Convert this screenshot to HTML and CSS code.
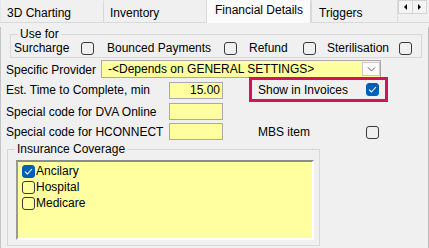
FILE: index.html
```html
<!DOCTYPE html>
<html>
<head>
<meta charset="utf-8">
<link rel="stylesheet" href="styles.css">
</head>
<body>
<div class="tabctl">
  <div class="tabbar">
    <div class="tab t1">3D Charting</div>
    <div class="tab t2">Inventory</div>
    <div class="tab active">Financial Details</div>
    <div class="tab t4">Triggers</div>
    <div class="spin">
      <span class="sbtn"><span class="tri left"></span></span>
      <span class="sbtn"><span class="tri right"></span></span>
    </div>
  </div>
  <div class="page">
    <fieldset class="grp usefor">
      <legend>Use for</legend>
      <div class="userow">
        <label class="opt o1">Surcharge<span class="cb"></span></label>
        <label class="opt o2">Bounced Payments<span class="cb"></span></label>
        <label class="opt o3">Refund<span class="cb"></span></label>
        <label class="opt o4">Sterilisation<span class="cb"></span></label>
      </div>
    </fieldset>

    <div class="provrow">
      <span class="plabel">Specific Provider</span>
      <div class="select">
        <span class="seltext">-&lt;Depends on GENERAL SETTINGS&gt;</span>
        <span class="dd"><svg width="9" height="6" viewBox="0 0 9 6"><path d="M1 1.5 L4.5 5 L8 1.5" fill="none" stroke="#606060" stroke-width="1"/></svg></span>
      </div>
    </div>

    <div class="fields">
      <span class="flabel">Est. Time to Complete, min</span>
      <span class="inp r1 num">15.00</span>
      <div class="hilite">
        <span>Show in Invoices</span>
        <span class="cb on"><svg width="9" height="7" viewBox="0 0 9 7"><path d="M1 3.6 L3.4 6 L8 1" fill="none" stroke="#fff" stroke-width="1.1"/></svg></span>
      </div>

      <span class="flabel">Special code for DVA Online</span>
      <span class="inp r2"></span>
      <span></span>

      <span class="flabel">Special code for HCONNECT</span>
      <span class="inp r2"></span>
      <div class="mbs">
        <span>MBS item</span>
        <span class="cb"></span>
      </div>
    </div>

    <fieldset class="grp ins">
      <legend>Insurance Coverage</legend>
      <div class="listbox">
        <div class="item"><span class="cb on"><svg width="9" height="7" viewBox="0 0 9 7"><path d="M1 3.6 L3.4 6 L8 1" fill="none" stroke="#fff" stroke-width="1.1"/></svg></span>Ancilary</div>
        <div class="item"><span class="cb"></span>Hospital</div>
        <div class="item"><span class="cb"></span>Medicare</div>
      </div>
    </fieldset>
  </div>
</div>
</body>
</html>
```
FILE: styles.css
```css
* { box-sizing: border-box; }
html, body { margin: 0; padding: 0; }
body {
  width: 429px;
  height: 248px;
  overflow: hidden;
  background: #f0f0f0;
  color: #000;
  font-family: "Liberation Sans", Arial, sans-serif;
  font-size: 12px;
  line-height: 14px;
}

/* tab strip */
.tabbar {
  display: flex;
  height: 23px;
}
.tab {
  height: 23px;
  margin-top: 0;
  border: 1px solid #d9d9d9;
  border-top-color: transparent;
  background: #f0f0f0;
  padding: 4px 0 0 6px;
  white-space: nowrap;
  border-right: none;
}
.tab.t1, .tab.t2, .tab.t4 {
  border-top: 1px solid #f0f0f0;
  padding-top: 5px;
}
.t1 { width: 103px; border-left-color: #e6e6e6; }
.t2 { width: 103px; }
.tab.active {
  width: 105px;
  background: #fbfbfb;
  border: 1px solid #d9d9d9;
  border-bottom: none;
  border-top: none;
  padding: 3px 0 0 8px;
}
.t4 {
  width: 87px;
  padding-left: 7px;
  border-right: 1px solid #d9d9d9;
}
.spin {
  width: 31px;
  height: 23px;
  display: flex;
  align-items: flex-start;
  border-bottom: 1px solid #d9d9d9;
}
.sbtn {
  width: 15px;
  height: 14px;
  border: 1px solid #d4d4d4;
  background: #f4f4f4;
  display: flex;
  align-items: center;
  justify-content: center;
  margin-right: -1px;
}
.tri {
  width: 0;
  height: 0;
  border-top: 3px solid transparent;
  border-bottom: 3px solid transparent;
}
.tri.left { border-right: 3px solid #000; }
.tri.right { border-left: 3px solid #000; }

/* page */
.page {
  height: 225px;
  border-left: 1px solid #c4c4c4;
  border-right: 1px solid #bcbcbc;
  border-bottom: 2px solid #c6c6c6;
  background: #f0f0f0;
  padding: 0 0 0 5px;
}

.grp {
  margin: 0;
  border: 1px solid #d8d8d8;
  min-width: 0;
}
.grp legend {
  padding: 0 2px;
  line-height: 14px;
}

.usefor {
  margin: 4px 0 0 4px;
  width: 412px;
  padding: 0 0 2px 3px;
}
.usefor legend { margin-left: 4px; }
.userow {
  display: flex;
  height: 14px;
  align-items: center;
}
.opt {
  display: flex;
  align-items: center;
  justify-content: space-between;
  white-space: nowrap;
}
.o1 { width: 80px; margin-right: 13px; }
.o2 { width: 130px; margin-right: 12px; }
.o3 { width: 67px; margin-right: 11px; }
.o4 { width: 85px; }

.cb {
  width: 13px;
  height: 13px;
  border: 1px solid #3a3a3a;
  border-radius: 3px;
  display: inline-flex;
  align-items: center;
  justify-content: center;
  flex: none;
}
.cb.on {
  background: #005fb8;
  border-color: #005fb8;
}

/* provider */
.provrow {
  display: flex;
  align-items: center;
  margin-top: 2px;
  height: 18px;
}
.plabel { width: 95px; padding-top: 1px; }
.select {
  width: 280px;
  height: 18px;
  background: #ffffa0;
  border: 1px solid #aaaaaa;
  display: flex;
  align-items: flex-start;
}
.seltext {
  flex: 1;
  padding: 1px 0 0 6px;
  white-space: nowrap;
}
.dd {
  width: 18px;
  height: 14px;
  margin-top: 1px;
  background: #fbfbfb;
  border: 1px solid #c8c8c8;
  display: flex;
  align-items: center;
  justify-content: center;
}

/* fields grid */
.fields {
  display: grid;
  grid-template-columns: 163px 80px 139px;
  grid-template-rows: 24px 20px 20px;
  align-items: center;
}
.inp {
  width: 54px;
  height: 17px;
  background: #ffffa0;
  border: 1px solid #aaaaaa;
  line-height: 15px;
}
.inp.r1 { align-self: end; margin-bottom: 3px; }
.inp.r2 { align-self: start; margin-top: 1px; }
.num { text-align: right; padding-right: 2px; }

.hilite {
  height: 25px;
  margin-top: -1px;
  border: 3px solid #cf1558;
  display: flex;
  align-items: center;
  justify-content: space-between;
  padding: 0 6px;
}
.mbs {
  display: flex;
  align-items: center;
  justify-content: space-between;
  padding: 0 9px;
}

/* insurance */
.ins {
  margin: 0 0 0 1px;
  width: 313px;
  height: 104px;
  padding: 4px 0 0 8px;
}
.ins legend { margin-left: -1px; }
.listbox {
  width: 298px;
  height: 80px;
  background: #ffffa0;
  border: 2px solid;
  border-color: #8c8c8c #ffffff #ffffff #9a9a9a;
  padding: 1px 0 0 4px;
}
.item {
  display: flex;
  align-items: center;
  height: 16px;
  white-space: nowrap;
}
.item .cb { margin-right: 1px; }
```
